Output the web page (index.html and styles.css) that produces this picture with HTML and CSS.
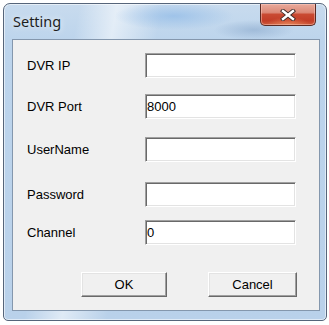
FILE: index.html
```html
<!DOCTYPE html>
<html>
<head>
<meta charset="utf-8">
<title>Setting</title>
<link rel="stylesheet" href="styles.css">
</head>
<body>
<div class="window">
  <div class="titlebar">
    <span class="title">Setting</span>
    <button class="close" aria-label="Close">
      <svg width="16" height="12" viewBox="0 0 16 12">
        <path d="M3 2 L13 10 M13 2 L3 10" stroke="#3c2a28" stroke-width="4.2" stroke-linecap="square" fill="none"/>
        <path d="M3 2 L13 10 M13 2 L3 10" stroke="#ffffff" stroke-width="2.4" stroke-linecap="square" fill="none"/>
      </svg>
    </button>
  </div>
  <div class="client">
    <div class="form">
      <div class="row">
        <label class="label">DVR IP</label>
        <input class="field" type="text" value="">
      </div>
      <div class="row row-port">
        <label class="label">DVR Port</label>
        <input class="field" type="text" value="8000">
      </div>
      <div class="row row-user">
        <label class="label">UserName</label>
        <input class="field" type="text" value="">
      </div>
      <div class="row row-pass">
        <label class="label">Password</label>
        <input class="field" type="text" value="">
      </div>
      <div class="row row-chan">
        <label class="label">Channel</label>
        <input class="field" type="text" value="0">
      </div>
    </div>
    <div class="buttons">
      <button class="btn btn-ok">OK</button>
      <button class="btn btn-cancel">Cancel</button>
    </div>
  </div>
</div>
</body>
</html>
```
FILE: styles.css
```css
html, body {
  margin: 0;
  padding: 0;
  background: #ffffff;
}
body {
  width: 329px;
  height: 325px;
  overflow: hidden;
  font-family: "Liberation Sans", Arial, sans-serif;
}
.window {
  margin: 3px 0 0 3px;
  width: 324px;
  height: 318px;
  box-sizing: border-box;
  border: 1px solid #56657a;
  border-radius: 7px 7px 5px 5px;
  padding: 0 6px 9px 8px;
  display: flex;
  flex-direction: column;
  background:
    radial-gradient(ellipse 60px 14px at 170px 12px, rgba(150,190,232,0.8), rgba(150,190,232,0) 100%),
    radial-gradient(ellipse 40px 10px at 250px 26px, rgba(140,170,205,0.6), rgba(140,170,205,0) 100%),
    linear-gradient(100deg, rgba(255,255,255,0) 20%, rgba(255,255,255,0.55) 30%, rgba(255,255,255,0) 42%),
    linear-gradient(to bottom, #c8dbee 0%, #bcd4ec 12%, #b9d1ea 100%);
  box-shadow: inset 0 0 0 1px rgba(255,255,255,0.55);
}
.titlebar {
  height: 35px;
  display: flex;
  align-items: flex-start;
  flex: none;
}
.title {
  align-self: center;
  margin-left: 1px;
  margin-top: -1px;
  font-family: "Noto Sans", "Open Sans", sans-serif;
  font-size: 14.5px;
  color: #1e1e1e;
  text-shadow: 0 0 6px rgba(255,255,255,0.9);
}
.close {
  margin-left: auto;
  margin-right: 4px;
  width: 56px;
  height: 22px;
  padding: 0;
  border: 1px solid #5b2a22;
  border-top: none;
  border-radius: 0 0 5px 5px;
  background:
    radial-gradient(ellipse 22px 8px at 50% 100%, rgba(240,150,100,0.7), rgba(240,150,100,0) 100%),
    linear-gradient(to bottom, #e9aa9b 0%, #dc8a78 40%, #c94a32 50%, #c23d27 80%, #cd5a3c 100%);
  box-shadow: inset 0 0 0 1px rgba(255,210,200,0.45);
  display: flex;
  align-items: center;
  justify-content: center;
}
.close svg {
  display: block;
}
.client {
  flex: 1;
  background: #f0f0f0;
  border: 1px solid #8497ad;
  display: flex;
  flex-direction: column;
}
.form {
  padding: 13px 0 0 14px;
  display: flex;
  flex-direction: column;
}
.row {
  display: flex;
  align-items: center;
  height: 25px;
}
.row-port { margin-top: 16px; }
.row-user { margin-top: 18px; }
.row-pass { margin-top: 20px; }
.row-chan { margin-top: 13px; }
.label {
  width: 118px;
  font-size: 13px;
  color: #000;
}
.field {
  width: 151px;
  height: 25px;
  box-sizing: border-box;
  margin: 0;
  padding: 0 0 0 1px;
  border: 1px solid;
  border-color: #a0a0a0 #ffffff #ffffff #a0a0a0;
  box-shadow: inset 1px 1px 0 #696969, inset -1px -1px 0 #e3e3e3;
  background: #ffffff;
  font-family: "Liberation Sans", Arial, sans-serif;
  font-size: 13px;
  color: #000;
  outline: none;
}
.buttons {
  display: flex;
  padding: 27px 0 0 68px;
}
.btn {
  height: 25px;
  box-sizing: border-box;
  margin: 0;
  padding: 0;
  border: 1px solid;
  border-color: #ffffff #696969 #696969 #ffffff;
  box-shadow: inset -1px -1px 0 #a0a0a0, inset 1px 1px 0 #e3e3e3;
  background: #f0f0f0;
  font-family: "Liberation Sans", Arial, sans-serif;
  font-size: 13px;
  color: #000;
}
.btn-ok {
  width: 86px;
}
.btn-cancel {
  width: 89px;
  margin-left: 41px;
}
```
